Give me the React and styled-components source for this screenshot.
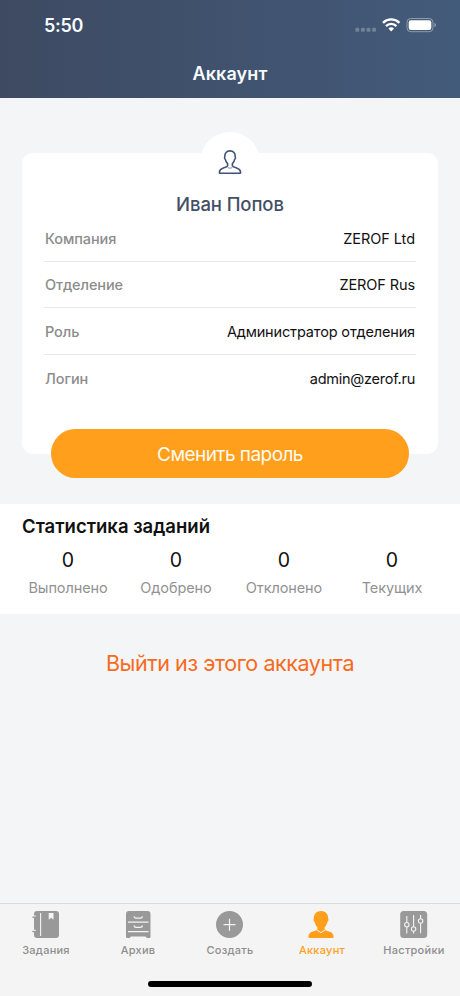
import React from "react";
import styled, { createGlobalStyle } from "styled-components";

const details = [
  { label: "Компания", value: "ZEROF Ltd", spacing: "-0.05px" },
  { label: "Отделение", value: "ZEROF Rus", spacing: "-0.1px" },
  { label: "Роль", value: "Администратор отделения", spacing: "-0.15px" },
  { label: "Логин", value: "admin@zerof.ru", spacing: "-0.25px" },
];

const stats = [
  { label: "Выполнено", count: 0 },
  { label: "Одобрено", count: 0 },
  { label: "Отклонено", count: 0 },
  { label: "Текущих", count: 0 },
];

const NotebookIcon = () => (
  <svg width="28" height="28" viewBox="0 0 28 28">
    <rect x="2" y="1" width="25" height="27" rx="3" fill="#999" />
    <path
      d="M1 7.2h3M1 21.5h3"
      stroke="#999"
      strokeWidth="1.6"
      strokeLinecap="round"
    />
    <path d="M2 5.5h1.8v1.1H2zM2 19.8h1.8v1.1H2z" fill="#f4f4f4" />
    <path d="M8.6 3v23" stroke="#f4f4f4" strokeWidth="1.1" />
    <path d="M16.7 3h4.8v6.8l-2.4-2-2.4 2z" fill="#f4f4f4" />
  </svg>
);

const ArchiveIcon = () => (
  <svg width="28" height="28" viewBox="0 0 28 28">
    <path
      d="M5 1h18.5a3 3 0 0 1 3 3v22.8a1.2 1.2 0 0 1-1.2 1.2H23l-1.500-1.500H7L5.500 28H3.200A1.200 1.200 0 0 1 2 26.800V4a3 3 0 0 1 3-3z"
      fill="#999"
    />
    <g fill="none" stroke="#f4f4f4" strokeWidth="1.3">
      <path d="M4 12.2h20.500M4 21.6h20.500" />
      <path d="M10 6.3c.3 1.3 1 1.900 2 1.900h4.500c1 0 1.700-.6 2-1.900M10 15.500c.3 1.300 1 1.900 2 1.900h4.500c1 0 1.700-.6 2-1.900" />
    </g>
  </svg>
);

const CreateIcon = () => (
  <svg width="28" height="28" viewBox="0 0 28 28">
    <circle cx="13.5" cy="14.5" r="13.5" fill="#999" />
    <path d="M13.5 8.7v12M7.5 14.7h12" stroke="#f4f4f4" strokeWidth="1.2" />
  </svg>
);

const AccountIcon = () => (
  <svg width="28" height="28" viewBox="0 0 28 28">
    <path
      d="M13 1c4.700 0 7.300 3.200 7.200 7.500.6 1.200.2 2.900-.8 3.500-.5 2.200-1.500 3.900-2.800 5.200v2.200c1 1.200 2.800 1.500 4.600 2.200 3 1 4.400 2.500 4.400 5.300 0 .7-.3 1.100-1 1.100H1.400c-.7 0-1-.4-1-1.100 0-2.800 1.400-4.300 4.400-5.300 1.800-.7 3.600-1 4.600-2.200v-2.200C8.100 15.900 7.100 14.200 6.600 12c-1-.6-1.400-2.300-.8-3.500C5.700 4.200 8.300 1 13 1z"
      fill="#ff9f1c"
    />
    <path
      d="M9 20.200l4 2.400 4-2.400"
      fill="none"
      stroke="#f4f4f4"
      strokeWidth="1"
    />
  </svg>
);

const SettingsIcon = () => (
  <svg width="28" height="28" viewBox="0 0 28 28">
    <rect x=".2" y="1" width="27" height="27" rx="3.5" fill="#999" />
    <g fill="none" stroke="#f4f4f4" strokeWidth="1.1">
      <path d="M6.8 6v6.500M6.800 17v6.500M13.600 5v11.800M13.600 21.300v2.200M20.600 5v3.800M20.600 13.300v10" />
      <circle cx="6.8" cy="14.7" r="2.2" />
      <circle cx="13.6" cy="19" r="2.2" />
      <circle cx="20.6" cy="11" r="2.2" />
    </g>
  </svg>
);

const tabs = [
  { label: "Задания", Icon: NotebookIcon },
  { label: "Архив", Icon: ArchiveIcon },
  { label: "Создать", Icon: CreateIcon },
  { label: "Аккаунт", Icon: AccountIcon, active: true },
  { label: "Настройки", Icon: SettingsIcon },
];

const StatusIcons = () => (
  <svg width="82" height="16" viewBox="0 0 82 16">
    <g fill="#fff" opacity=".25">
      <rect x="0.3" y="10.8" width="4" height="4" rx="1.3" />
      <rect x="5.9" y="10.8" width="4" height="4" rx="1.3" />
      <rect x="11.5" y="10.8" width="4" height="4" rx="1.3" />
      <rect x="17.1" y="10.8" width="4" height="4" rx="1.3" />
    </g>
    <g fill="none" stroke="#fff" strokeWidth="2.3">
      <path d="M28 5.900a11.500 11.500 0 0 1 16.400 0" />
      <path d="M31 9.100a7.300 7.300 0 0 1 10.400 0" />
    </g>
    <path d="M33.400 11.500a4 4 0 0 1 5.600 0l-2.800 3z" fill="#fff" />
    <rect
      x="52"
      y="1.5"
      width="26"
      height="13.2"
      rx="3.8"
      fill="none"
      stroke="#fff"
      strokeOpacity=".4"
    />
    <rect x="53.7" y="3.2" width="22.6" height="9.8" rx="2.3" fill="#fff" />
    <path d="M79.400 6v4.200c1-.4 1.600-1.200 1.600-2.100s-.6-1.700-1.600-2.100z" fill="#fff" opacity=".4" />
  </svg>
);

const ProfileIcon = () => (
  <svg width="24" height="26" viewBox="0 0 24 26" fill="none">
    <path
      d="M12 1.900c3.500 0 5.400 2.400 5.200 5.700.4.700.2 2.200-.5 2.800-.4 1.900-1.200 3.200-2.300 4.200v2.300c.7 1.100 2.300 1.500 4.200 2.100 2.500.8 4 2 4 4.700 0 .3-.2.500-.5.500H1.900c-.3 0-.5-.2-.5-.5 0-2.700 1.500-3.900 4-4.700 1.900-.6 3.500-1 4.200-2.100v-2.300c-1.100-1-1.900-2.300-2.300-4.200-.7-.6-.9-2.100-.5-2.800-.2-3.300 1.700-5.700 5.200-5.700z"
      stroke="#405376"
      strokeWidth="1.6"
      strokeLinejoin="round"
    />
    <path d="M9.400 17.700c1 2 4.200 2 5.200 0" stroke="#7188a8" />
  </svg>
);

const App = () => {
  return (
    <Screen>
      <GlobalStyle />
      <Header>
        <StatusBar>
          <time>5:50</time>
          <StatusIcons />
        </StatusBar>
        <h1>Аккаунт</h1>
      </Header>
      <Content>
        <Card>
          <Avatar>
            <ProfileIcon />
          </Avatar>
          <Name>Иван Попов</Name>
          <Details>
            {details.map(({ label, value, spacing }) => (
              <DetailRow key={label} $spacing={spacing}>
                <dt>{label}</dt>
                <dd>{value}</dd>
              </DetailRow>
            ))}
          </Details>
          <PasswordButton>Сменить пароль</PasswordButton>
        </Card>
        <Stats>
          <h2>Статистика заданий</h2>
          <div className="grid">
            {stats.map(({ label, count }) => (
              <Stat key={label}>
                <strong>{count}</strong>
                <span>{label}</span>
              </Stat>
            ))}
          </div>
        </Stats>
        <LogoutButton>Выйти из этого аккаунта</LogoutButton>
      </Content>
      <TabBar>
        <nav>
          {tabs.map(({ label, Icon, active }) => (
            <Tab key={label} $active={active}>
              <Icon />
              <span>{label}</span>
            </Tab>
          ))}
        </nav>
        <HomeIndicator />
      </TabBar>
    </Screen>
  );
};

const GlobalStyle = createGlobalStyle`
  * {
    box-sizing: border-box;
    margin: 0;
    padding: 0;
  }
  body {
    font-family: Inter, "Liberation Sans", sans-serif;
    background: #f3f5f7;
  }
  button {
    border: none;
    background: none;
    font-family: inherit;
    cursor: pointer;
  }
  svg {
    display: block;
    flex-shrink: 0;
  }
`;

const Screen = styled.div`
  display: flex;
  flex-direction: column;
  width: 460px;
  height: 996px;
  overflow: hidden;
  background: #f3f5f7;
`;

const Header = styled.header`
  height: 98px;
  color: #f7fbff;
  background: linear-gradient(90deg, #3e4a62 0%, #40526e 50%, #435b7a 100%);
  h1 {
    margin-top: 12px;
    text-align: center;
    font-size: 18px;
    font-weight: 600;
    line-height: 24px;
    letter-spacing: 0.1px;
  }
`;

const StatusBar = styled.div`
  display: flex;
  justify-content: space-between;
  align-items: center;
  height: 50px;
  padding: 0 23px 0 44px;
  time {
    padding-top: 1px;
    font-size: 18px;
    font-weight: 600;
    line-height: 24px;
    letter-spacing: -0.3px;
  }
`;

const Content = styled.main`
  flex: 1;
  display: flex;
  flex-direction: column;
  padding-top: 55px;
`;

const Card = styled.section`
  display: flex;
  flex-direction: column;
  align-items: center;
  height: 301px;
  margin: 0 22px;
  padding: 0 22px;
  border-radius: 11px;
  background: #fff;
`;

const Avatar = styled.div`
  display: flex;
  flex-shrink: 0;
  justify-content: center;
  width: 60px;
  height: 60px;
  margin-top: -21px;
  padding-top: 17px;
  border-radius: 50%;
  background: #fff;
`;

const Name = styled.h2`
  flex-shrink: 0;
  color: #434f66;
  font-size: 18.5px;
  font-weight: 500;
  line-height: 24px;
  letter-spacing: -0.1px;
`;

const Details = styled.dl`
  flex-shrink: 0;
  width: 100%;
  margin-top: -1px;
`;

const DetailRow = styled.div`
  display: flex;
  justify-content: space-between;
  align-items: center;
  height: 46.6px;
  padding-top: 1px;
  font-size: 14.5px;
  border-bottom: 1px solid #e9eaeb;
  &:last-child {
    padding: 0;
    border-bottom: none;
  }
  dt {
    padding-left: 1px;
    color: #8c8c8c;
    font-weight: 500;
    letter-spacing: -0.1px;
  }
  dd {
    padding-right: 1px;
    color: #111;
    letter-spacing: ${({ $spacing }) => $spacing};
  }
`;

const PasswordButton = styled.button`
  flex-shrink: 0;
  width: 358px;
  height: 49px;
  margin-top: 28px;
  padding-top: 1px;
  border-radius: 25px;
  background: #ff9f1c;
  color: #fffaf0;
  font-size: 19px;
  letter-spacing: -0.55px;
`;

const Stats = styled.section`
  height: 110px;
  margin-top: 50px;
  padding-top: 10px;
  background: #fff;
  h2 {
    padding-left: 22px;
    color: #111;
    font-size: 18.5px;
    font-weight: 600;
    line-height: 24px;
  }
  .grid {
    display: grid;
    grid-template-columns: repeat(4, 1fr);
    padding: 9px 14px 0;
  }
`;

const Stat = styled.div`
  display: flex;
  flex-direction: column;
  align-items: center;
  strong {
    color: #111;
    font-size: 19.5px;
    font-weight: 400;
    line-height: 26px;
  }
  span {
    margin-top: 5px;
    color: #929292;
    font-size: 14.5px;
    line-height: 20px;
    letter-spacing: -0.1px;
  }
`;

const LogoutButton = styled.button`
  align-self: center;
  margin-top: 34px;
  color: #f76b1c;
  font-size: 21.5px;
  line-height: 30px;
  letter-spacing: -0.42px;
`;

const TabBar = styled.footer`
  height: 93px;
  border-top: 1px solid #d9dadc;
  background: #f4f4f4;
  nav {
    display: grid;
    grid-template-columns: repeat(5, 1fr);
    padding-top: 6px;
  }
`;

const Tab = styled.button`
  display: flex;
  flex-direction: column;
  align-items: center;
  color: ${({ $active }) => ($active ? "#ff9f1c" : "#8e8e8e")};
  font-size: 11px;
  font-weight: 500;
  line-height: 14px;
  letter-spacing: 0.25px;
  span {
    margin-top: 5px;
  }
`;

const HomeIndicator = styled.div`
  width: 164px;
  height: 6px;
  margin: 24px auto 0;
  border-radius: 3px;
  background: #000;
`;

export default App;
